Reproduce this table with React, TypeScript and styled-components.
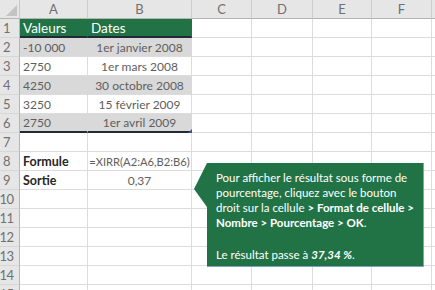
import React from 'react';
import styled, { createGlobalStyle } from 'styled-components';

const COLUMNS = ['A', 'B', 'C', 'D', 'E', 'F', 'G'];
const ROW_COUNT = 15;

type CellData = {
  text: string;
  align?: 'left' | 'center';
  bold?: boolean;
  small?: boolean;
};

// Sheet contents, keyed by row number then column letter
const sheet: Record<number, Record<string, CellData>> = {
  1: { A: { text: 'Valeurs' }, B: { text: 'Dates' } },
  2: { A: { text: '-10 000' }, B: { text: '1er janvier 2008', align: 'center' } },
  3: { A: { text: '2750' }, B: { text: '1er mars 2008', align: 'center' } },
  4: { A: { text: '4250' }, B: { text: '30 octobre 2008', align: 'center' } },
  5: { A: { text: '3250' }, B: { text: '15 février 2009', align: 'center' } },
  6: { A: { text: '2750' }, B: { text: '1er avril 2009', align: 'center' } },
  8: {
    A: { text: 'Formule', bold: true },
    B: { text: '=XIRR(A2:A6,B2:B6)', align: 'center', small: true },
  },
  9: { A: { text: 'Sortie', bold: true }, B: { text: '0,37', align: 'center' } },
};

const inTable = (row: number, col: string) => row >= 1 && row <= 6 && (col === 'A' || col === 'B');

export default function App() {
  return (
    <>
      <GlobalStyle />
      <Screen>
        <Grid>
          <Corner>
            <CornerMark />
          </Corner>
          {COLUMNS.map((c) => (
            <ColHeader key={c}>{c}</ColHeader>
          ))}
          {Array.from({ length: ROW_COUNT }, (_, i) => i + 1).map((row) => (
            <React.Fragment key={row}>
              <RowHeader>{row}</RowHeader>
              {COLUMNS.map((col) => {
                const data = sheet[row]?.[col];
                const table = inTable(row, col);
                return (
                  <Cell
                    key={col}
                    $head={table && row === 1}
                    $band={table && row % 2 === 0}
                    $rule={table && (row === 1 || row === 6)}
                    $align={data?.align ?? 'left'}
                    $bold={!!data?.bold}
                    $small={!!data?.small}
                  >
                    {data?.text}
                    {row === 6 && col === 'B' && <ResizeHandle />}
                  </Cell>
                );
              })}
            </React.Fragment>
          ))}
        </Grid>

        <Callout>
          <CalloutArrow viewBox="0 0 13 46" aria-hidden>
            <polygon points="13,0 0,26 13,44" fill="#217346" />
          </CalloutArrow>
          <p>
            Pour afficher le résultat sous forme de pourcentage, cliquez avec le bouton droit sur la
            cellule <b>&gt; Format de cellule &gt; Nombre &gt; Pourcentage &gt; OK</b>.
          </p>
          <p>
            Le résultat passe à <b><i>37,34 %</i></b>.
          </p>
        </Callout>
      </Screen>
    </>
  );
}

const GlobalStyle = createGlobalStyle`
  html, body {
    margin: 0;
    padding: 0;
    background: #ffffff;
  }
  body {
    font-family: Lato, "Open Sans", sans-serif;
  }
`;

const Screen = styled.div`
  position: relative;
  width: 435px;
  height: 290px;
  overflow: hidden;
  background: #ffffff;
`;

const Grid = styled.div`
  display: grid;
  grid-template-columns: 20px 68px 104px 60px 61px 59px 60px 40px;
  grid-auto-rows: 19px;
`;

const Corner = styled.div`
  position: relative;
  background: #e6e6e6;
  border-right: 1px solid #c8c8c8;
  border-bottom: 1px solid #b4b4b4;
`;

const CornerMark = styled.div`
  position: absolute;
  right: 2px;
  bottom: 2px;
  width: 0;
  height: 0;
  border-left: 11px solid transparent;
  border-bottom: 11px solid #c4c4c4;
`;

const ColHeader = styled.div`
  display: flex;
  align-items: center;
  justify-content: center;
  background: #e6e6e6;
  color: #707070;
  font-size: 13px;
  border-right: 1px solid #cdcdcd;
  border-bottom: 1px solid #b4b4b4;
`;

const RowHeader = styled.div`
  display: flex;
  align-items: center;
  justify-content: center;
  padding-right: 6px;
  background: #e6e6e6;
  color: #707070;
  font-size: 13px;
  letter-spacing: -0.5px;
  border-right: 1px solid #b4b4b4;
  border-bottom: 1px solid #d6d6d6;
`;

const Cell = styled.div<{
  $head: boolean;
  $band: boolean;
  $rule: boolean;
  $align: 'left' | 'center';
  $bold: boolean;
  $small: boolean;
}>`
  position: relative;
  display: flex;
  align-items: center;
  justify-content: ${(p) => (p.$align === 'center' ? 'center' : 'flex-start')};
  padding: 0 3px;
  white-space: nowrap;
  background: ${(p) => (p.$head ? '#217346' : p.$band ? '#d9d9d9' : '#ffffff')};
  color: ${(p) => (p.$head ? '#ffffff' : p.$bold ? '#262626' : '#5e5e5e')};
  font-weight: ${(p) => (p.$bold ? 700 : 400)};
  font-size: ${(p) => (p.$head ? '13.5px' : p.$bold ? '12.5px' : p.$small ? '11.2px' : '12px')};
  border-right: 1px solid ${(p) => (p.$head || p.$band ? 'transparent' : '#dcdcdc')};
  border-bottom: ${(p) => (p.$rule ? '2px solid #1f2a36' : '1px solid #dcdcdc')};
`;

const ResizeHandle = styled.span`
  position: absolute;
  right: -2px;
  bottom: -2px;
  width: 0;
  height: 0;
  border-left: 5px solid transparent;
  border-bottom: 5px solid #2f55a4;
`;

const Callout = styled.div`
  position: absolute;
  left: 207px;
  top: 163px;
  box-sizing: border-box;
  width: 217px;
  height: 104px;
  padding: 7px 8px 0 9px;
  background: #217346;
  border-right: 1px solid #7f9fc6;
  border-bottom: 1px solid #7f9fc6;
  color: #ffffff;
  font-size: 11.5px;
  line-height: 15px;

  p {
    margin: 0;
  }
  p + p {
    margin-top: 17px;
  }
  b {
    font-weight: 700;
  }
`;

const CalloutArrow = styled.svg`
  position: absolute;
  left: -13px;
  top: 0;
  width: 13px;
  height: 46px;
`;
